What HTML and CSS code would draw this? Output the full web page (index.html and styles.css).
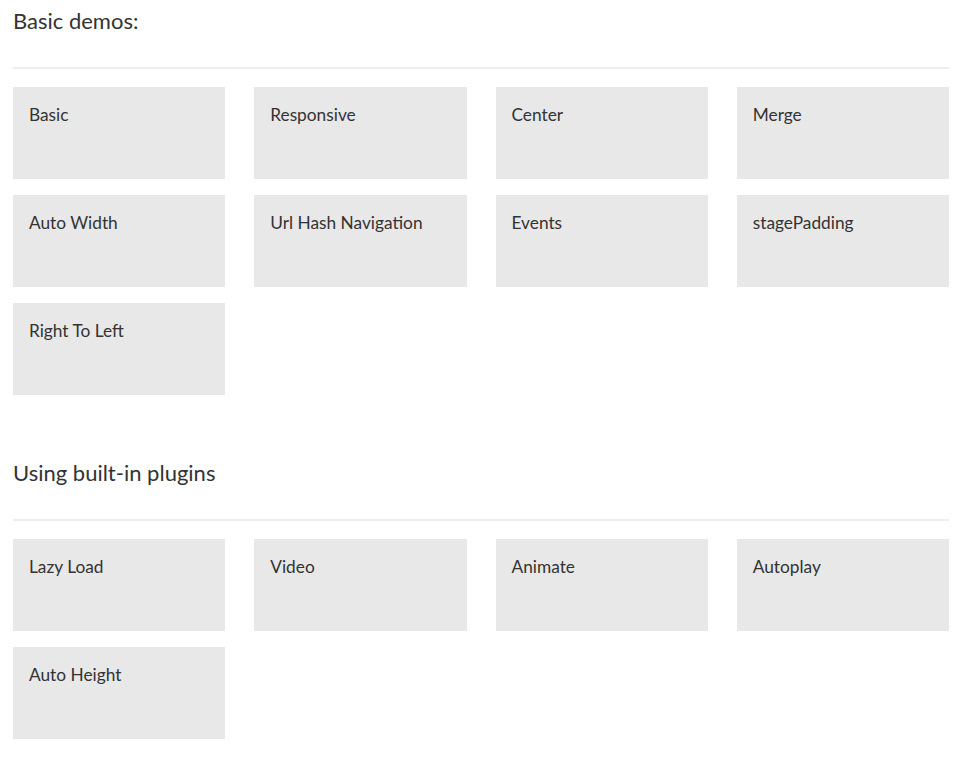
FILE: index.html
```html
<!DOCTYPE html>
<html lang="en">
<head>
	<meta charset="UTF-8">
	<title>Demos</title>
	<link rel="stylesheet" href="styles.css">
</head>
<body>
	<section class="demos">
		<h3 class="demos-title">Basic demos:</h3>
		<ul class="tiles">
			<li><a href="javascript:;">Basic</a></li>
			<li><a href="javascript:;">Responsive</a></li>
			<li><a href="javascript:;">Center</a></li>
			<li><a href="javascript:;">Merge</a></li>
			<li><a href="javascript:;">Auto Width</a></li>
			<li><a href="javascript:;">Url Hash Navigation</a></li>
			<li><a href="javascript:;">Events</a></li>
			<li><a href="javascript:;">stagePadding</a></li>
			<li><a href="javascript:;">Right To Left</a></li>
		</ul>
	</section>
	<section class="demos">
		<h3 class="demos-title">Using built-in plugins</h3>
		<ul class="tiles">
			<li><a href="javascript:;">Lazy Load</a></li>
			<li><a href="javascript:;">Video</a></li>
			<li><a href="javascript:;">Animate</a></li>
			<li><a href="javascript:;">Autoplay</a></li>
			<li><a href="javascript:;">Auto Height</a></li>
		</ul>
	</section>
</body>
</html>
```
FILE: styles.css
```css
body{
	margin: 0;
	padding: 8px 17px 0 13px;
	font-family: Lato, "Liberation Sans", sans-serif;
	color: #333;
	background: #fff;
}
.demos{
	margin-bottom: 65px;
}
.demos-title{
	margin: 0;
	font-size: 22px;
	font-weight: normal;
	line-height: 26px;
	padding-bottom: 33px;
	border-bottom: 2px solid #eee;
	margin-bottom: 18px;
}
.tiles{
	padding: 0;
	margin: 0;
	list-style: none;
	display: grid;
	grid-template-columns: repeat(4, 1fr);
	column-gap: 29px;
	row-gap: 16px;
}
.tiles li{
	height: 92px;
	background: #e8e8e8;
}
.tiles a{
	display: block;
	padding: 17px 16px 16px;
	font-size: 17.3px;
	line-height: 1.3;
	color: #333;
	text-decoration: none;
}
```
